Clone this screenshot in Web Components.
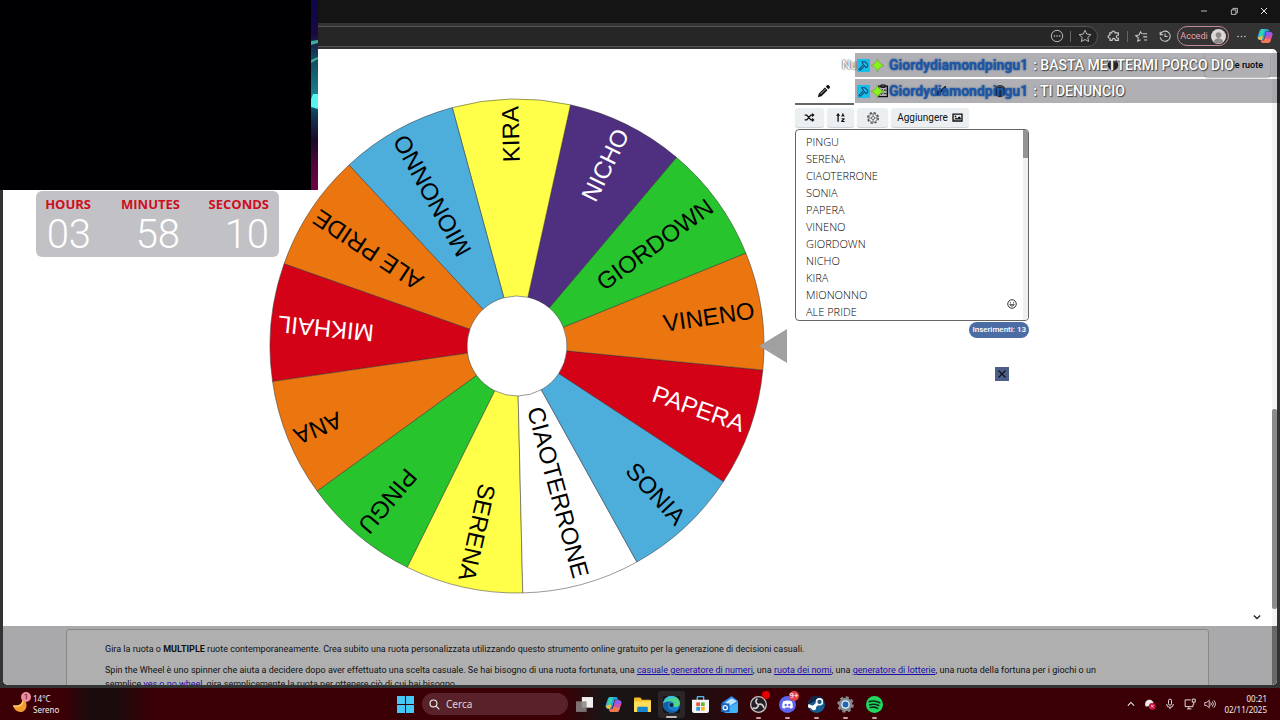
<!DOCTYPE html>
<html lang="it">
<head>
<meta charset="utf-8">
<title>Spin the Wheel</title>
<style>
  body {
    margin: 0;
    height: 100vh;
    overflow: hidden;
    background: #000;
    font-family: Roboto, "Liberation Sans", sans-serif;
  }
</style>
</head>
<body>
<desk-top></desk-top>

<script>
// every icon used on the page, all in a 16x16 box
const icons = {
  minimize: '<path d="M4 8h8" stroke="currentColor" fill="none"/>',
  restore: '<path d="M4.500 6.500h6v6h-6zM6.500 6V4.500h6v6H11" stroke="currentColor" fill="none"/>',
  close: '<path d="M4 4l8 8M12 4l-8 8" stroke="currentColor" stroke-width="1.300" fill="none"/>',
  more: '<circle cx="3" cy="8" r="1.200"/><circle cx="8" cy="8" r="1.200"/><circle cx="13" cy="8" r="1.200"/>',
  circledots: '<circle cx="8" cy="8" r="6.500" fill="none" stroke="currentColor"/><circle cx="5" cy="8" r=".9"/><circle cx="8" cy="8" r=".9"/><circle cx="11" cy="8" r=".9"/>',
  star: '<path d="M8 1.500l2 4.300 4.700.6-3.500 3.200.9 4.700L8 12l-4.100 2.300.9-4.700L1.300 6.400 6 5.800z" fill="none" stroke="currentColor" stroke-linejoin="round"/>',
  puzzle: '<path d="M3 4.500h2.500a1.800 1.800 0 1 1 3.500 0H13V7a1.800 1.800 0 1 0 0 3.500V13H9.500a1.800 1.800 0 1 0-3.500 0H3.500v-2.500a1.800 1.800 0 1 1 0-3.500z" fill="none" stroke="currentColor" stroke-width="1.300" stroke-linejoin="round"/>',
  favorites: '<path d="M9.500 5.500H15M10.500 9H15M11.500 12.500H15M7.500 12.200l-3.300 1.900.8-4L1.800 7.400l4-.6L7.500 3l1.200 2.500" fill="none" stroke="currentColor" stroke-width="1.200" stroke-linejoin="round"/>',
  history: '<path d="M2.500 3v3.500H6M2.800 6A5.800 5.800 0 1 1 2.500 9.500M8 5v3.500h3" fill="none" stroke="currentColor" stroke-width="1.200"/>',
  person: '<circle cx="8" cy="8" r="8" fill="#dcd8d8"/><circle cx="8" cy="6.500" r="3" fill="#8e8a8a"/><path d="M3 13.500c1-5 9-5 10 0a8 8 0 0 1-10 0z" fill="#8e8a8a"/>',
  copilot: '<path d="M5 1h5c1.500 0 2 1 2.400 2.500H9L6.500 12H3.300C1 12 0 10.500.8 8L2.500 3C3 1.500 3.800 1 5 1z" fill="#2a9be8"/><path d="M1.500 8L3 3.500C3.500 2 4 1 6 1h2L5.500 9z" fill="#36cfb0"/><path d="M1 9l5-1-1 4H3.300C1.800 12 1 11 1 9z" fill="#e9c43c"/><path d="M11 15H6c-1.500 0-2-1-2.400-2.500H7L9.500 4h3.200c2.300 0 3.300 1.500 2.500 4l-1.700 5c-.5 1.500-1.300 2-2.500 2z" fill="#d252a5"/><path d="M9.500 4h3.200c2 0 3 1.300 2.600 3L8.500 8z" fill="#8c5bf0"/><path d="M4 12.500h3L8 10l6 1.500-.8 1.800c-.5 1.200-1.300 1.700-2.200 1.700H6c-1.300 0-1.800-1-2-2.500z" fill="#f2784f"/>',
  pencil: '<path d="M2 11l7-7 3 3-7 7-4 1zM10 3l1.500-1.500q1-.8 2 0l1 1q.8 1 0 2L13 6z"/><path d="M4 11.500l5.500-5.500" stroke="#fff" stroke-width=".8"/>',
  clipboard: '<path d="M3 2.500h10v12H3z" fill="none" stroke="currentColor" stroke-width="1.500"/><path d="M5.500 1h5v3h-5zM5 7l1 1 1.500-2M9 7h3M5 11l1 1 1.500-2M9 11h3" fill="none" stroke="currentColor"/>',
  brush: '<path d="M2 13c0-4 2-5 4-5l7-6 1 1-6 7c0 2-2 4-6 3z"/><path d="M1 8h14" stroke="currentColor"/>',
  ball: '<circle cx="8" cy="8" r="7" fill="#333"/><path d="M3 5q5-5 10 0" stroke="#888" fill="none"/>',
  shuffle: '<path d="M1 4.500h3l6 7h3M1 11.500h3l6-7h3" fill="none" stroke="currentColor" stroke-width="2"/><path d="M11.500 1.500L15.500 4.500l-4 3zM11.500 8.500l4 3-4 3z"/>',
  sort: '<path d="M4.500 14V4" stroke="currentColor" stroke-width="2"/><path d="M1.500 5.500l3-4 3 4zM9 7l2.500-6L14 7h-1.500v-1h-2v1zM9.500 9H14v1.500L11.500 13H14v1.500H9V13l2.500-2.500h-2z"/>',
  gear: '<g fill="none" stroke="#555"><circle cx="8" cy="8" r="6" stroke-width="1.800" stroke-dasharray="2.700 2"/><circle cx="8" cy="8" r="4.800" stroke-width=".8"/><circle cx="8" cy="8" r="1.800" stroke-width=".9"/><path d="M8 3.500V6M8 10v2.500M3.500 8H6M10 8h2.500" stroke-width=".8"/></g>',
  picture: '<path d="M1.500 3h13v10h-13z" fill="none" stroke="currentColor" stroke-width="2"/><circle cx="5" cy="6.500" r="1.300"/><path d="M3 11l3-3 1.500 1.500L10.500 6 13 9v2z"/>',
  smile: '<circle cx="8" cy="8" r="6.800" fill="none" stroke="currentColor" stroke-width="1.400"/><circle cx="5.500" cy="6" r="1"/><circle cx="10.500" cy="6" r="1"/><path d="M4.500 9q3.500 5 7 0z" fill="none" stroke="currentColor" stroke-width="1.200"/>',
  chevron: '<path d="M3 5.500l5 5 5-5" fill="none" stroke="currentColor" stroke-width="2"/>',
  chevronup: '<path d="M3 10.500l5-5 5 5" fill="none" stroke="currentColor" stroke-width="1.700"/>',
  hammer: '<path d="M0 1q0-1 1-1h14q1 0 1 1v14q0 1-1 1H1q-1 0-1-1z" fill="#18bdec"/><path d="M6 3.500h4l3 3v3l-2 1-1.500-2L4 14l-1.500-1.500L8 7z" fill="none" stroke="#124d70" stroke-width="1.300"/>',
  spark: '<path d="M8 0q1.500 6 8 8-6.500 2-8 8-1.500-6-8-8 6.500-2 8-8z" fill="#8af01e" stroke="#4e9c12" stroke-width=".6"/>',
  moon: '<path d="M10 0c1 7-3 10-10 9 1 4 4 7 9 7 6-1 8-10 1-16z" fill="#f39b2d"/><path d="M10 0c1 7-3 10-10 9l.5 1.500C8 12 12 8 11.500 1z" fill="#ffcf62"/>',
  windows: '<path d="M0 0h7.500v7.500H0zM8.500 0H16v7.500H8.500zM0 8.500h7.500V16H0zM8.500 8.500H16V16H8.500z" fill="#45c8f5"/>',
  search: '<circle cx="6.500" cy="6.500" r="5" fill="none" stroke="currentColor" stroke-width="1.700"/><path d="M10 10l5 5" stroke="currentColor" stroke-width="1.700"/>',
  taskview: '<path d="M5.500 1H16v10H5.500z" fill="#f1eeee"/><path d="M0 5h10v10H0z" fill="#8a8585" fill-opacity=".85"/>',
  folder: '<path d="M0 2.500q0-1 1-1h5l1.500 2H15q1 0 1 1V14q0 1-1 1H1q-1 0-1-1z" fill="#f5bd26"/><path d="M0 5h16v9q0 1-1 1H1q-1 0-1-1z" fill="#ffdc59"/><path d="M3 15v-4q0-1 1-1h8q1 0 1 1v4z" fill="#1685d2"/>',
  edge: '<circle cx="8" cy="8" r="8" fill="#1a7fd4"/><path d="M.2 7C1 2 4.500 0 8 0c5 0 8 3.500 8 6.500 0 2.500-2 4-4 4-1.500 0-2.500-.7-2-1.500 1-2-1-4-4-4-2.500 0-4.800.8-5.800 2z" fill="#4fd58d"/><path d="M.2 7C1 2 4.500 0 8 0c2.500 0 4 1 5 2C8 1 3 3 .2 7z" fill="#38bfe0"/><path d="M6 6c-3 3-1 8 4 8 2 0 3.500-.6 4.500-1.500C12 18 1 17 .2 8 2 5.500 4.500 5 6 6z" fill="#125ea8"/><circle cx="8" cy="8.500" r="1.800" fill="#17253a"/>',
  store: '<path d="M5 4V1.500q0-1 1-1h4q1 0 1 1V4" fill="none" stroke="#4fb8f5" stroke-width="1.300"/><path d="M0 3.500h16V14q0 2-2 2H2q-2 0-2-2z" fill="#f4f4f6"/><path d="M4 6h3.500v3.500H4z" fill="#e85a2b"/><path d="M8.500 6H12v3.500H8.500z" fill="#6fb32d"/><path d="M4 10.300h3.500v3.500H4z" fill="#279bdd"/><path d="M8.500 10.300H12v3.500H8.500z" fill="#f3b61f"/>',
  outlook: '<path d="M1 6l9-6 6 4.500V14q0 2-2 2H3z" fill="#2a83e5"/><path d="M4 6l6-4 5 3-8 5z" fill="#bfe6ff"/><path d="M4 12l12-6v8q0 2-2 2H5z" fill="#43b3f8"/><path d="M0 7h8v8H0z" fill="#1165c3"/><circle cx="4" cy="11" r="2" fill="none" stroke="#fff" stroke-width="1.200"/>',
  obs: '<circle cx="8" cy="8" r="7.400" fill="#231f24" stroke="#c8c3c5" stroke-width="1.200"/><path d="M8 8C5 7 5 4 7 2.500M8 8c3-1 5 1 5 3.500M8 8c0 3-3 4.500-5.500 3" fill="none" stroke="#d7d2d4" stroke-width="1.600"/>',
  discord: '<circle cx="8" cy="8" r="8" fill="#5b65ee"/><path d="M4 5q4-1.500 8 0 1.500 3 1 6l-2 1-1-1.200H6L5 12l-2-1q-.5-3 1-6z" fill="#fff"/><circle cx="6.300" cy="8.500" r="1.100" fill="#5b65ee"/><circle cx="9.700" cy="8.500" r="1.100" fill="#5b65ee"/>',
  steam: '<circle cx="8" cy="8" r="8" fill="#155d93"/><path d="M0 8a8 8 0 0 1 16-1L10 3z" fill="#132544"/><path d="M0 9l5 2 5-5" stroke="#fff" stroke-width="3" fill="none"/><circle cx="10.800" cy="5.500" r="2.800" fill="#155d93" stroke="#fff" stroke-width="1.500"/><circle cx="5.500" cy="11.200" r="2.200" fill="#fff"/>',
  settings: '<circle cx="8" cy="8" r="6.300" fill="#84898f" stroke="#84898f" stroke-width="3" stroke-dasharray="2.700 2.250"/><circle cx="8" cy="8" r="6" fill="#84898f"/><circle cx="8" cy="8" r="4" fill="#e9f4ff"/><circle cx="8" cy="8" r="2.800" fill="#1f65b4"/>',
  spotify: '<circle cx="8" cy="8" r="8" fill="#20d760"/><path d="M3 5.300q5.500-1.500 10 1M3.500 8.200q4.500-1.200 8.500.8M4 10.800q4-1 7 .8" stroke="#102b18" stroke-width="1.500" stroke-linecap="round" fill="none"/>',
  shield: '<path d="M2 11C0 5 5 1 10 3l3 3-5 2c-1 3-3 4-6 3z" fill="#eee"/><circle cx="11" cy="11" r="4.500" fill="#cf1745"/><path d="M9.500 9.500l3 3M12.500 9.500l-3 3" stroke="#fff"/>',
  mic: '<path d="M6 3.500a2 2 0 0 1 4 0v4a2 2 0 0 1-4 0zM3.500 8a4.500 4.500 0 0 0 9 0M8 12.500V15" fill="none" stroke="currentColor" stroke-width="1.200"/>',
  network: '<path d="M9 2.500H1.500v9H12V8.500M4 14.500h6M6.500 11.500v3M11 1.500h4v4h-4zM13 5.500V9" fill="none" stroke="currentColor" stroke-width="1.200"/>',
  volume: '<path d="M1 6h2.500L7 3v10L3.500 10H1zM9 6q1.500 2 0 4M11 4.500q3 3.500 0 7M13 3q4.500 5 0 10" fill="none" stroke="currentColor" stroke-width="1.100"/>'
};

class UiIcon extends HTMLElement {
  constructor() {
    super();
    this.attachShadow({mode: 'open'});
  }

  connectedCallback() {
    this.shadowRoot.innerHTML = `
      <style>
        :host { display: block; flex: none; width: var(--size, 16px); height: var(--size, 16px); }
        svg { display: block; width: 100%; height: 100%; fill: currentColor; }
      </style>
      <svg viewBox="0 0 16 16" aria-hidden="true">${icons[this.getAttribute('name')]}</svg>
    `;
  }
}//end UiIcon

customElements.define('ui-icon', UiIcon);


// most elements have nothing but a template, so they are made here
function define(name, html) {
  const template = document.createElement('template');
  template.innerHTML = html;

  customElements.define(name, class extends HTMLElement {
    constructor() {
      super();
      this.attachShadow({mode: 'open'});
      this.shadowRoot.appendChild(template.content.cloneNode(true));
    }
  });
}

const entries = [
  ['PINGU', '#28c42d'],
  ['SERENA', '#ffff4a'],
  ['CIAOTERRONE', '#ffffff'],
  ['SONIA', '#4daedc'],
  ['PAPERA', '#d30216', '#fff'],
  ['VINENO', '#eb760f'],
  ['GIORDOWN', '#28c42d'],
  ['NICHO', '#4f2f7f', '#fff'],
  ['KIRA', '#ffff4a'],
  ['MIONONNO', '#4daedc'],
  ['ALE PRIDE', '#eb760f'],
  ['MIKHAIL', '#d30216', '#fff'],
  ['ANA', '#eb760f']
];


class SpinWheel extends HTMLElement {
  constructor() {
    super();
    this.attachShadow({mode: 'open'});
  }

  connectedCallback() {
    const step = 360 / entries.length;
    const start = Number(this.getAttribute('angle'));
    const outer = 247;
    const inner = 50;

    const point = (radius, degrees) => {
      const a = degrees * Math.PI / 180;
      return (radius * Math.cos(a)).toFixed(2) + ' ' + (radius * Math.sin(a)).toFixed(2);
    };

    //entries run counterclockwise round the wheel
    const slices = entries.map(([label, color, ink = '#000'], i) => {
      const middle = start - i * step;
      const from = middle - step / 2;
      const to = middle + step / 2;
      return `
        <path fill="${color}" d="M${point(inner, from)}L${point(outer, from)}A${outer} ${outer} 0 0 1 ${point(outer, to)}L${point(inner, to)}A${inner} ${inner} 0 0 0 ${point(inner, from)}z"/>
        <text x="240" y="7" fill="${ink}" transform="rotate(${middle})">${label}</text>`;
    }).join('');

    this.shadowRoot.innerHTML = `
      <style>
        :host { display: block; }
        svg { display: block; width: 518px; height: 496px; }
        path { stroke: #333; stroke-opacity: .5; stroke-width: 1px; }
        text { font: 24px "Liberation Sans", Arial, sans-serif; text-anchor: end; }
      </style>
      <svg viewBox="-248 -248 518 496" role="img" aria-label="Ruota">
        ${slices}
        <polygon points="242,0 270,-17 270,17" fill="#a0a0a0"/>
      </svg>
    `;
  }
}//end SpinWheel

customElements.define('spin-wheel', SpinWheel);


define('entry-panel', `
  <style>
    :host { display: block; width: 234px; }
    button { border: 0; margin: 0; padding: 0; background: none; color: #111; font: 10px Roboto, sans-serif; display: flex; align-items: center; justify-content: center; }
    nav { display: grid; grid-template-columns: repeat(4, 1fr); }
    nav button { height: 26px; border-bottom: 2px solid transparent; --size: 14px; }
    nav button.on { border-color: #666; }
    .tools { display: flex; gap: 3px; padding: 3px 0 2px; }
    .tools button { height: 19px; border-radius: 3px; background: #eceff2; box-shadow: 0 1px 1px #ccd0d3; --size: 11px; width: 29px; gap: 4px; }
    .tools button:nth-child(2) { width: 27px; }
    .tools button:nth-child(3) { width: 31px; --size: 14px; }
    .tools .add { width: 78px; }
    .box { position: relative; display: flex; height: 190px; border: 1px solid #666; border-radius: 4px; background: #fff; }
    textarea { flex: 1; min-width: 0; box-sizing: border-box; border: 0; margin: 0; padding: 3px 10px; resize: none; outline: 0; background: none; overflow: hidden; color: #000; font: 300 11px/17px "Open Sans", "Noto Sans", sans-serif; }
    .bar { width: 5px; background: #f0f0f0; border-radius: 0 4px 4px 0; }
    .bar i { display: block; height: 28px; background: #949494; border-radius: 0 3px 0 0; }
    .smile { position: absolute; right: 11px; bottom: 11px; --size: 10px; }
    .count { width: fit-content; margin: 1px 0 0 auto; padding: 0 3px; border-radius: 8px; background: #4c6ca5; color: #fff; font: 500 8px/16px Roboto, sans-serif; }
    .close { width: 14px; height: 14px; margin: 29px 20px 0 auto; background: #4b5f8a; --size: 14px; }
  </style>
  <nav>
    <button class="on" aria-label="Modifica"><ui-icon name="pencil"></ui-icon></button>
    <button aria-label="Risultati"><ui-icon name="clipboard"></ui-icon></button>
    <button aria-label="Stile"><ui-icon name="brush"></ui-icon></button>
    <button aria-label="Tema"><ui-icon name="ball"></ui-icon></button>
  </nav>
  <div class="tools">
    <button aria-label="Mescola"><ui-icon name="shuffle"></ui-icon></button>
    <button aria-label="Ordina"><ui-icon name="sort"></ui-icon></button>
    <button aria-label="Impostazioni"><ui-icon name="gear"></ui-icon></button>
    <button class="add">Aggiungere <ui-icon name="picture"></ui-icon></button>
  </div>
  <div class="box">
    <textarea aria-label="Inserimenti" spellcheck="false">${entries.map(entry => entry[0]).join('\n')}</textarea>
    <div class="bar"><i></i></div>
    <button class="smile" aria-label="Emoji"><ui-icon name="smile"></ui-icon></button>
  </div>
  <div class="count">Inserimenti: 13</div>
  <button class="close" aria-label="Chiudi"><ui-icon name="close"></ui-icon></button>
`);


define('site-footer', `
  <style>
    :host { display: block; height: 59px; overflow: hidden; background: #a9a9ac; color: #111; font-size: 9px; line-height: 14px; }
    section { margin: 3px 63px 0; border: 1px solid #888; border-radius: 3px; background: #afafaf; padding: 12px 84px 0 38px; }
    p { margin: 0 0 7px; }
    a { color: #1a0dab; }
  </style>
  <section>
    <p>Gira la ruota o <b>MULTIPLE</b> ruote contemporaneamente. Crea subito una ruota personalizzata utilizzando questo strumento online gratuito per la generazione di decisioni casuali.</p>
    <p>Spin the Wheel è uno spinner che aiuta a decidere dopo aver effettuato una scelta casuale. Se hai bisogno di una ruota fortunata, una <a href="#numeri">casuale generatore di numeri</a>, una <a href="#nomi">ruota dei nomi</a>, una <a href="#lotterie">generatore di lotterie</a>, una ruota della fortuna per i giochi o un semplice <a href="#yesno">yes o no wheel</a>, gira semplicemente la ruota per ottenere ciò di cui hai bisogno.</p>
  </section>
`);


define('wheel-page', `
  <style>
    :host { display: flex; min-height: 0; background: #fff; border-radius: 0 5px 5px 5px; overflow: hidden; }
    .content { flex: 1; min-width: 0; display: flex; flex-direction: column; }
    main { flex: 1; min-height: 0; display: flex; flex-direction: column; }
    header { display: flex; align-items: center; width: 428px; height: 24px; margin: 4px 2px 1px auto; font-size: 10px; }
    header span { color: #fff; font-size: 12px; text-shadow: 0 0 2px #555, 0 0 2px #555; }
    header ui-icon { margin: 0 86px 0 auto; --size: 12px; }
    header button { border: 0; border-radius: 3px; width: 65px; height: 24px; padding: 0 7px; background: #fff; box-shadow: 0 1px 2px #aaa; font: 500 9px Roboto, sans-serif; color: #000; text-align: right; }
    .row { flex: 1; min-height: 0; display: grid; grid-template-columns: 1fr auto auto 1fr; padding-left: 23px; align-items: start; }
    spin-wheel { grid-column: 2; margin-top: 20px; }
    entry-panel { grid-column: 3; margin: 1px 0 0 8px; }
    .down { align-self: flex-end; border: 0; padding: 0; margin: 0 10px 4px; background: none; color: #222; --size: 10px; }
    .bar { width: 5px; display: flex; flex-direction: column; background: #f4f4f4; }
    .bar i { height: 200px; background: #8b8b8b; margin-top: auto; border-radius: 2px; }
    .bar b { height: 59px; margin-top: 17px; background: #686868; }
  </style>
  <div class="content">
    <main>
      <header><span>Nu</span><ui-icon name="ball"></ui-icon><button>le ruote</button></header>
      <div class="row">
        <spin-wheel angle="130.200"></spin-wheel>
        <entry-panel></entry-panel>
      </div>
      <button class="down" aria-label="Scorri"><ui-icon name="chevron"></ui-icon></button>
    </main>
    <site-footer></site-footer>
  </div>
  <div class="bar"><i></i><b></b></div>
`);


define('browser-bar', `
  <style>
    :host { display: block; color: #ccc; }
    button { border: 0; margin: 0; padding: 0; background: none; color: inherit; display: flex; align-items: center; justify-content: center; font: 9px Roboto, sans-serif; }
    .title { display: flex; justify-content: flex-end; height: 23px; padding-right: 1px; background: #141414; --size: 12px; color: #eee; }
    .title button { width: 30px; height: 22px; }
    .tools { display: flex; align-items: center; height: 26px; padding-right: 3px; background: #333; --size: 14px; }
    .address { flex: 1; display: flex; align-items: center; height: 19px; margin-right: 4px; border: 1px solid #555; border-radius: 0 11px 11px 0; background: #262626; }
    input { flex: 1; border: 0; outline: 0; background: none; height: 16px; padding: 0; color: #ddd; }
    .address button { width: 25px; }
    .icon { width: 24px; }
    .small { --size: 11px; }
    .large { --size: 16px; }
    hr { width: 1px; height: 11px; border: 0; margin: 0 1px; background: #666; }
    .login { width: 52px; height: 20px; border: 1px solid #c28792; border-radius: 11px; color: #eda0ab; gap: 3px; --size: 15px; }
  </style>
  <div class="title">
    <button aria-label="Riduci a icona"><ui-icon name="minimize"></ui-icon></button>
    <button aria-label="Ripristina"><ui-icon name="restore"></ui-icon></button>
    <button aria-label="Chiudi"><ui-icon name="close"></ui-icon></button>
  </div>
  <div class="tools">
    <div class="address">
      <input aria-label="Indirizzo">
      <button aria-label="Altro"><ui-icon name="circledots"></ui-icon></button><hr>
      <button aria-label="Preferito"><ui-icon name="star"></ui-icon></button>
    </div>
    <button class="icon" aria-label="Estensioni"><ui-icon name="puzzle"></ui-icon></button><hr>
    <button class="icon" aria-label="Preferiti"><ui-icon name="favorites"></ui-icon></button>
    <button class="icon" aria-label="Cronologia"><ui-icon name="history"></ui-icon></button>
    <button class="login">Accedi <ui-icon name="person"></ui-icon></button>
    <button class="icon small" aria-label="Menu"><ui-icon name="more"></ui-icon></button>
    <button class="icon large" aria-label="Copilot"><ui-icon name="copilot"></ui-icon></button>
  </div>
`);


define('task-bar', `
  <style>
    :host { display: grid; grid-template-columns: 1fr auto 1fr; align-items: center; height: 32px; color: #eee; font: 8px/11px "Noto Sans", sans-serif;
      background: linear-gradient(90deg, #3a0006 0, #3a0006 5%, #1b0b0c 7%, #1b0b0c 9%, #3a0006 12%, #3a0006 44%, #1b1414 47%, #171213 53%, #3a0006 60%); }
    .weather { display: flex; align-items: center; gap: 5px; padding-left: 13px; --size: 15px; }
    .moon, .app { position: relative; }
    .badge { position: absolute; right: -3px; top: -5px; min-width: 10px; border-radius: 5px; background: #f08a9c; color: #401; font: 8px/10px Roboto, sans-serif; text-align: center; }
    .apps { display: flex; align-items: center; gap: 12px; --size: 17px; }
    button { border: 0; margin: 0; padding: 0; background: none; color: inherit; }
    .search { display: flex; align-items: center; box-sizing: border-box; width: 146px; height: 22px; margin: 0 -4px; padding: 0 7px; gap: 6px; border-radius: 11px; background: #59222a; --size: 11px; }
    input { flex: 1; min-width: 0; border: 0; outline: 0; padding: 0; background: none; color: #eee; font: 10px "Noto Sans", sans-serif; }
    input::placeholder { color: #ded3d4; }
    .run::after { content: ""; position: absolute; left: 6px; bottom: -6px; width: 5px; height: 2px; border-radius: 1px; background: #d0a0a0; }
    .on { box-shadow: 0 0 0 5px #2b2728; border-radius: 1px; }
    .on::after { left: 3px; width: 11px; bottom: -5px; background: #bbb; }
    .red { background: #e6404f; color: #fff; }
    .dot { background: #e40000; width: 8px; min-width: 8px; height: 8px; }
    .tray { display: flex; align-items: center; justify-content: flex-end; gap: 8px; padding-right: 13px; text-align: right; --size: 12px; }
    .up { --size: 10px; }
  </style>
  <div class="weather">
    <div class="moon"><ui-icon name="moon"></ui-icon><span class="badge">1</span></div>
    <div>14°C<br>Sereno</div>
  </div>
  <div class="apps">
    <button aria-label="Start"><ui-icon name="windows"></ui-icon></button>
    <div class="search"><ui-icon name="search"></ui-icon><input placeholder="Cerca" aria-label="Cerca"></div>
    <button class="app" aria-label="Attività"><ui-icon name="taskview"></ui-icon></button>
    <button class="app" aria-label="Copilot"><ui-icon name="copilot"></ui-icon></button>
    <button class="app" aria-label="File"><ui-icon name="folder"></ui-icon></button>
    <button class="app run on" aria-label="Edge"><ui-icon name="edge"></ui-icon></button>
    <button class="app" aria-label="Store"><ui-icon name="store"></ui-icon></button>
    <button class="app" aria-label="Outlook"><ui-icon name="outlook"></ui-icon></button>
    <button class="app run" aria-label="OBS"><ui-icon name="obs"></ui-icon><span class="badge dot"></span></button>
    <button class="app run" aria-label="Discord"><ui-icon name="discord"></ui-icon><span class="badge red">9+</span></button>
    <button class="app run" aria-label="Steam"><ui-icon name="steam"></ui-icon></button>
    <button class="app run" aria-label="Impostazioni"><ui-icon name="settings"></ui-icon></button>
    <button class="app run" aria-label="Spotify"><ui-icon name="spotify"></ui-icon></button>
  </div>
  <div class="tray">
    <ui-icon class="up" name="chevronup"></ui-icon>
    <ui-icon name="shield"></ui-icon>
    <ui-icon name="mic"></ui-icon>
    <ui-icon name="network"></ui-icon>
    <ui-icon name="volume"></ui-icon>
    <div>00:21<br>02/11/2025</div>
  </div>
`);


define('count-down', `
  <style>
    :host { display: grid; grid-template-columns: 55px 89px 89px; box-sizing: border-box; width: 243px; height: 66px; padding: 4px 10px 0 0; border-radius: 6px; background: #c2c2c6; text-align: right; }
    ::slotted(b) { display: block; color: #cf0d20; font: 700 13px/18px "Open Sans", Roboto, sans-serif; }
    ::slotted(span) { display: block; color: #fff; font: 300 40px/38px Roboto, sans-serif; }
  </style>
  <slot></slot>
`);


define('chat-line', `
  <style>
    :host { display: flex; align-items: center; box-sizing: border-box; height: 24px; padding-left: 2px; gap: 1px; background: rgba(0, 0, 12, .31); --size: 13px; color: #fff; font: 500 14px/24px Roboto, sans-serif; white-space: nowrap; text-shadow: 1px 1px 1px #444, 0 0 2px #666; }
    ::slotted(b) { color: #1d57a8; text-shadow: 0 0 2px #123a78; margin: 0 4px; }
  </style>
  <ui-icon name="hammer"></ui-icon>
  <ui-icon name="spark"></ui-icon>
  <slot></slot>
`);


define('desk-top', `
  <style>
    :host { position: relative; display: grid; grid-template-rows: auto minmax(0, 1fr) auto; height: 100vh; background: #333; overflow: hidden; }
    wheel-page { margin: 0 3px 3px; }
    /* stream overlays, they float above the browser */
    .cam { position: absolute; left: 0; top: 0; width: 318px; height: 190px; background: #000003; }
    .cam svg { position: absolute; right: 0; top: 0; width: 7px; height: 190px; }
    count-down { position: absolute; left: 36px; top: 191px; }
    .chat { position: absolute; right: 0; top: 53px; width: 425px; display: grid; gap: 2px; }
  </style>
  <browser-bar></browser-bar>
  <wheel-page></wheel-page>
  <task-bar></task-bar>
  <div class="cam">
    <svg viewBox="0 0 7 190" preserveAspectRatio="none">
      <linearGradient id="glow" x2="0" y2="1">
        <stop offset="0" stop-color="#0c0748"/><stop offset=".18" stop-color="#1b0745"/>
        <stop offset=".3" stop-color="#10475c"/><stop offset=".5" stop-color="#1b7f91"/>
        <stop offset=".6" stop-color="#0c3c5c"/><stop offset=".74" stop-color="#190829"/>
        <stop offset=".87" stop-color="#54063f"/><stop offset="1" stop-color="#690646"/>
      </linearGradient>
      <path d="M0 0h7v190H0z" fill="url(#glow)"/>
      <path d="M0 41l7-1v3l-7 2zM0 60l7-3v2l-7 4z" fill="#3fae9c"/>
      <path d="M2 94h5v15l-7-2v-8z" fill="#55f4f0"/>
    </svg>
  </div>
  <count-down>
    <b>HOURS</b><b>MINUTES</b><b>SECONDS</b>
    <span>03</span><span>58</span><span>10</span>
  </count-down>
  <div class="chat">
    <chat-line><b>Giordydiamondpingu1</b> : BASTA METTERMI PORCO DIO</chat-line>
    <chat-line><b>Giordydiamondpingu1</b> : TI DENUNCIO</chat-line>
  </div>
`);
</script>
</body>
</html>
